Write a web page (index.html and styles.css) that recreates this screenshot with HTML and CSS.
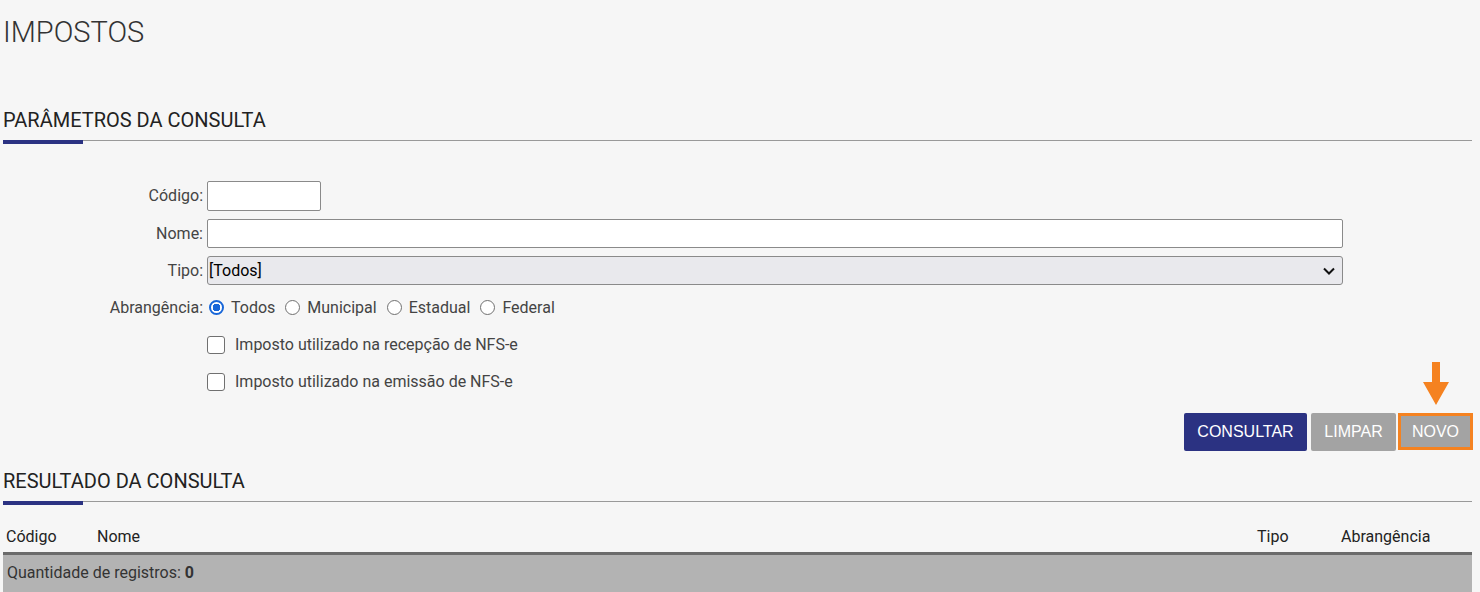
FILE: index.html
```html
<!DOCTYPE html>
<html lang="pt-BR">
<head>
<meta charset="utf-8">
<title>Impostos</title>
<link rel="stylesheet" href="styles.css">
</head>
<body>
<div class="page">
  <h1 class="title">IMPOSTOS</h1>

  <div class="section-head"><h2>PARÂMETROS DA CONSULTA</h2></div>

  <form class="form">
    <label class="lbl first" for="cod">Código:</label>
    <div class="field first"><input id="cod" class="inp inp-short" type="text"></div>

    <label class="lbl" for="nome">Nome:</label>
    <div class="field"><input id="nome" class="inp" type="text"></div>

    <label class="lbl" for="tipo">Tipo:</label>
    <div class="field">
      <div class="select">
        <span>[Todos]</span>
        <svg class="chev" width="14" height="10" viewBox="0 0 14 10"><path d="M2 2.5 L7 7.5 L12 2.5" fill="none" stroke="#111" stroke-width="2"/></svg>
      </div>
    </div>

    <span class="lbl">Abrangência:</span>
    <div class="field radios">
      <label class="opt"><span class="radio on"></span>Todos</label>
      <label class="opt"><span class="radio"></span>Municipal</label>
      <label class="opt"><span class="radio"></span>Estadual</label>
      <label class="opt"><span class="radio"></span>Federal</label>
    </div>

    <span class="lbl"></span>
    <div class="field"><label class="chk"><span class="box"></span>Imposto utilizado na recepção de NFS-e</label></div>

    <span class="lbl"></span>
    <div class="field"><label class="chk"><span class="box"></span>Imposto utilizado na emissão de NFS-e</label></div>
  </form>

  <div class="actions">
    <button type="button" class="btn btn-primary">CONSULTAR</button>
    <button type="button" class="btn btn-gray">LIMPAR</button>
    <div class="novo-wrap">
      <svg class="arrow" width="28" height="44" viewBox="0 0 28 44"><path d="M10 0 H18 V20 H27 L14 43 L1 20 H10 Z" fill="#f58220"/></svg>
      <button type="button" class="btn btn-gray btn-hl">NOVO</button>
    </div>
  </div>

  <div class="section-head result-head"><h2>RESULTADO DA CONSULTA</h2></div>

  <div class="table">
    <div class="thead">
      <span class="c-cod">Código</span>
      <span class="c-nome">Nome</span>
      <span class="c-tipo">Tipo</span>
      <span class="c-abr">Abrangência</span>
    </div>
    <div class="tfoot">Quantidade de registros: <b>0</b></div>
  </div>
</div>
</body>
</html>
```
FILE: styles.css
```css
* { box-sizing: border-box; }
html, body { margin: 0; padding: 0; background: #f6f6f6; }
body {
  font-family: Roboto, "Liberation Sans", Arial, sans-serif;
  color: #333;
  overflow: hidden;
}
.page { padding: 0 8px 0 3px; }

.title {
  margin: 0;
  padding-top: 14px;
  font-weight: 300;
  font-size: 29px;
  line-height: 36px;
  color: #333;
}

.section-head {
  position: relative;
  border-bottom: 1px solid #999;
  margin-top: 52px;
  height: 39px;
}
.section-head::after {
  content: "";
  position: absolute;
  left: 0;
  top: 38px;
  width: 80px;
  height: 4px;
  background: #2b3282;
}
.section-head h2 {
  margin: 0;
  padding-top: 6px;
  font-weight: 400;
  font-size: 20px;
  line-height: 24px;
  color: #222;
}

.form {
  display: grid;
  grid-template-columns: 200px 1136px;
  column-gap: 4px;
  row-gap: 8px;
  margin-top: 40px;
  font-size: 16px;
  color: #444;
}
.lbl {
  text-align: right;
  height: 29px;
  line-height: 29px;
  color: #444;
}
.field { height: 29px; display: flex; align-items: center; }
.lbl.first, .field.first { height: 30px; line-height: 30px; }
.inp {
  width: 100%;
  height: 29px;
  border: 1px solid #8a8a8a;
  border-radius: 2px;
  background: #fff;
  font: inherit;
  padding: 0 4px;
}
.inp-short { width: 114px; height: 30px; }
.select {
  width: 100%;
  height: 29px;
  border: 1px solid #8a8a8a;
  border-radius: 3px;
  background: #e9e9ed;
  display: flex;
  align-items: center;
  justify-content: space-between;
  padding: 0 6px 0 1px;
  font-size: 16px;
  color: #000;
}
.chev { display: block; }

.radios { gap: 8px; }
.opt { display: flex; align-items: center; gap: 7px; color: #444; }
.radio {
  width: 15px; height: 15px;
  border: 1.5px solid #707070;
  border-radius: 50%;
  background: #fff;
  display: inline-block;
  margin-left: 2px;
}
.radio.on {
  border: 2px solid #1866d8;
  background: radial-gradient(circle, #1866d8 0 3.6px, #fff 4px);
}
.chk { display: flex; align-items: center; gap: 10px; color: #444; }
.box {
  width: 18px; height: 18px;
  border: 1.5px solid #707070;
  border-radius: 3px;
  background: #fff;
  display: inline-block;
}

.actions {
  display: flex;
  justify-content: flex-end;
  align-items: flex-end;
  gap: 4px;
  margin-top: 17px;
  margin-right: -1px;
}
.btn {
  font-family: "Liberation Sans", Arial, sans-serif;
  font-size: 16px;
  color: #fff;
  border: 0;
  border-radius: 2px;
  height: 38px;
  padding: 0;
}
.btn-primary { background: #2b3282; width: 123px; }
.btn-gray { background: #a3a3a3; width: 85px; }
.novo-wrap { position: relative; margin-left: -2px; }
.btn-hl {
  width: 75px;
  height: 37px;
  border: 3px solid #f58220;
  border-radius: 0;
  margin-bottom: 1px;
}
.arrow { position: absolute; left: 24px; top: -51px; }

.result-head { margin-top: 12px; }

.table { margin-top: 10px; font-size: 16px; }
.thead {
  position: relative;
  height: 43px;
  border-bottom: 3px solid #6b6b6b;
  color: #222;
}
.thead span { position: absolute; top: 15px; }
.c-cod { left: 3px; }
.c-nome { left: 94px; }
.c-tipo { left: 1254px; }
.c-abr { left: 1338px; }
.tfoot {
  background: #b3b3b3;
  height: 40px;
  line-height: 36px;
  padding-left: 4px;
  color: #333;
}
.tfoot b { font-weight: 700; }
```
